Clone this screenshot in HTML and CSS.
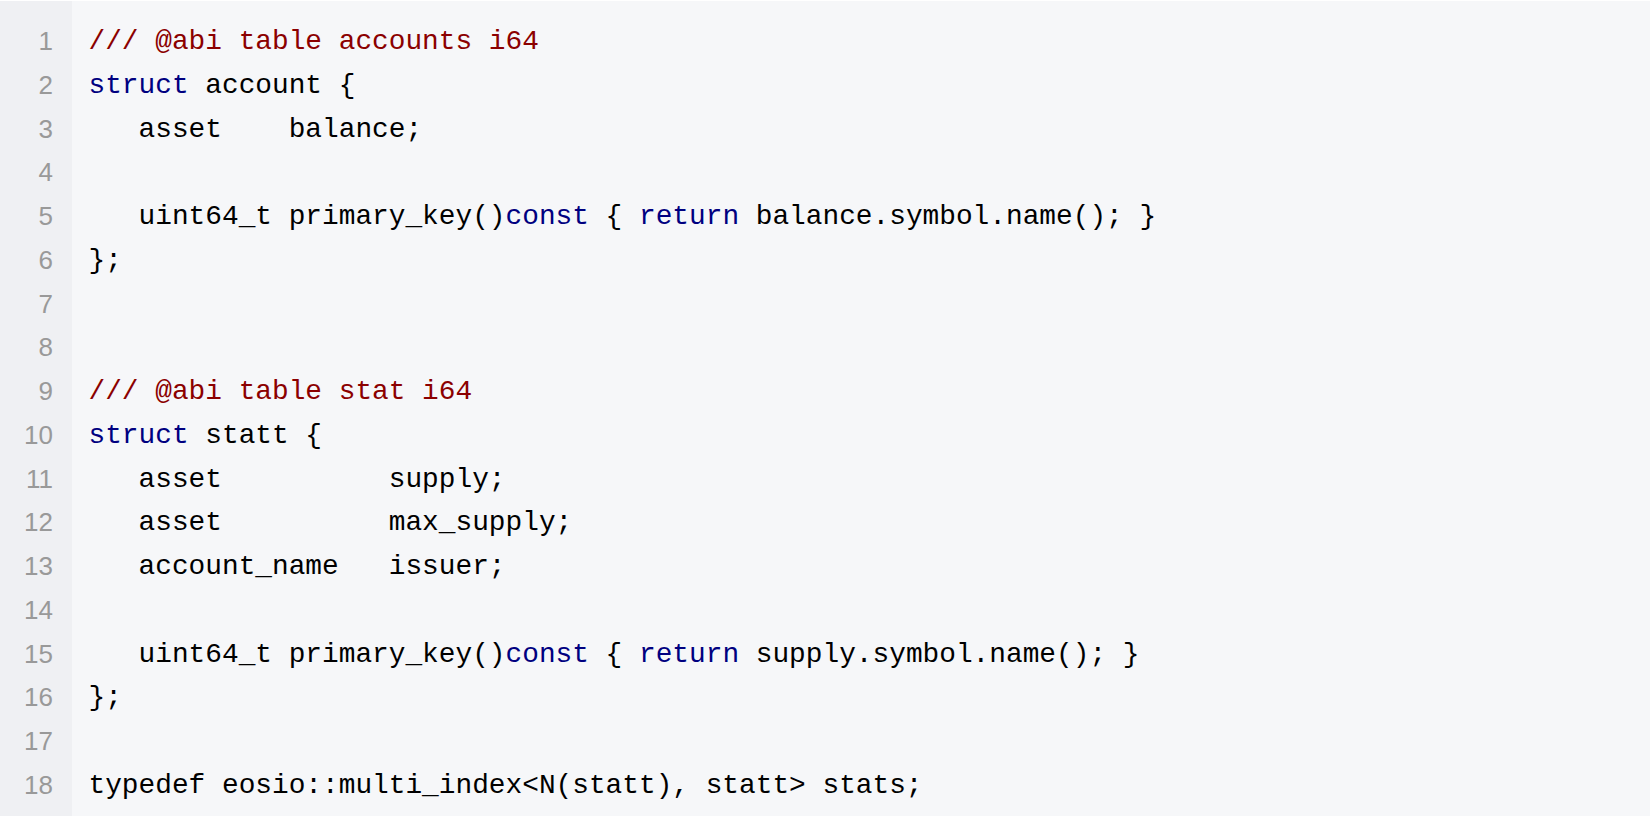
FILE: index.html
```html
<!DOCTYPE html>
<html>
<head>
<meta charset="utf-8">
<link rel="stylesheet" href="styles.css">
</head>
<body>
<div class="code-block">
  <div class="gutter">
    <div class="ln">1</div><div class="ln">2</div><div class="ln">3</div><div class="ln">4</div><div class="ln">5</div><div class="ln">6</div><div class="ln">7</div><div class="ln">8</div><div class="ln">9</div><div class="ln">10</div><div class="ln">11</div><div class="ln">12</div><div class="ln">13</div><div class="ln">14</div><div class="ln">15</div><div class="ln">16</div><div class="ln">17</div><div class="ln">18</div>
  </div>
  <pre class="code"><span class="c">/// @abi table accounts i64</span>
<span class="k">struct</span> account {
   asset    balance;

   uint64_t primary_key()<span class="k">const</span> { <span class="k">return</span> balance.symbol.name(); }
};


<span class="c">/// @abi table stat i64</span>
<span class="k">struct</span> statt {
   asset          supply;
   asset          max_supply;
   account_name   issuer;

   uint64_t primary_key()<span class="k">const</span> { <span class="k">return</span> supply.symbol.name(); }
};

typedef eosio::multi_index&lt;N(statt), statt&gt; stats;</pre>
</div>
</body>
</html>
```
FILE: styles.css
```css
html, body {
  margin: 0;
  padding: 0;
  background: #ffffff;
}

.code-block {
  display: flex;
  margin-top: 1px;
  height: 815px;
  background: #f6f7f9;
}

.gutter {
  width: 53px;
  padding: 19px 19px 0 0;
  background: #eff0f3;
  text-align: right;
  font-family: "Liberation Sans", Arial, sans-serif;
  font-size: 26px;
  line-height: 43.75px;
  color: #999999;
}

.ln {
  height: 43.75px;
}

.code {
  margin: 0;
  padding: 19px 0 0 16.5px;
  font-family: "Liberation Mono", "Courier New", monospace;
  font-size: 27.8px;
  line-height: 43.75px;
  color: #000000;
}

.c {
  color: #8b0000;
}

.k {
  color: #000080;
}
```
